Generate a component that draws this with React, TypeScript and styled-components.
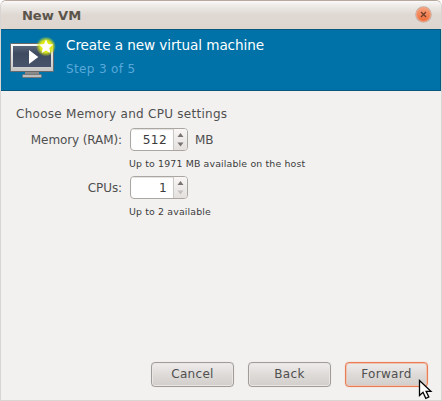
import React from "react";
import styled, { createGlobalStyle } from "styled-components";

const GlobalStyle = createGlobalStyle`
  * { box-sizing: border-box; }
  html, body { margin: 0; background: #fff; overflow: hidden; }
  body { font-family: "DejaVu Sans", sans-serif; color: #4f4f4f; }
`;

const Window = styled.main`
  position: relative;
  width: 442px;
  height: 401px;
  display: flex;
  flex-direction: column;
  border: 1px solid #d8d5d3;
  border-top-color: #b8a99f;
  border-radius: 6px 6px 0 0;
  background: #f2f1f0;
  overflow: hidden;
  white-space: nowrap;
`;

const TitleBar = styled.header`
  height: 28px;
  flex: none;
  display: flex;
  align-items: flex-start;
  justify-content: space-between;
  padding: 0 9px 0 21px;
  background: linear-gradient(#fbfaf9 0, #efece9 4px, #dfd8d2 14px, #dfd6d0 100%);
`;

const WindowTitle = styled.h1`
  margin: 0;
  font-size: 13.1px;
  line-height: 29px;
  font-weight: bold;
  letter-spacing: -0.1px;
  color: #5b544b;
`;

const CloseButton = styled.button`
  width: 17px;
  height: 17px;
  margin-top: 5px;
  padding: 0;
  border: 0;
  background: none;
  svg { display: block; }
`;

const Banner = styled.section`
  height: 62px;
  flex: none;
  display: flex;
  gap: 10px;
  padding: 7px 0 0 7px;
  border: 1px solid #07577f;
  border-left: 0;
  background: #0072a8;
`;

const BannerText = styled.div`
  flex: 1;
`;

const Heading = styled.h2`
  margin: 0;
  font-size: 13.6px;
  line-height: 17px;
  font-weight: normal;
  letter-spacing: -0.1px;
  color: #fff;
`;

const Step = styled.div`
  margin-top: 7px;
  font-size: 12px;
  line-height: 17px;
  letter-spacing: 0.35px;
  color: #58a9da;
`;

const Content = styled.section`
  flex: 1;
  padding: 14px 15px 0;
  font-size: 12px;
`;

const Intro = styled.div`
  height: 23px;
  line-height: 18px;
  letter-spacing: 0.27px;
`;

const Field = styled.div`
  display: grid;
  grid-template-columns: 106px 58px auto;
  column-gap: 7px;
  align-items: center;
  height: 23px;
  padding-left: 1px;
`;

const Label = styled.label`
  padding-right: 1px;
  text-align: right;
  letter-spacing: -0.1px;
`;

const Hint = styled.div`
  height: 25px;
  padding: 5px 0 0 113px;
  font-size: 9.4px;
  line-height: 16px;
  letter-spacing: 0.15px;
  color: #3c3c3c;
`;

const SpinBox = styled.div`
  display: flex;
  width: 58px;
  height: 23px;
  border: 1px solid #aaa6a2;
  border-radius: 4px;
  background: #fff;
  overflow: hidden;
`;

const Value = styled.span`
  flex: 1;
  padding-right: 6px;
  font-size: 12.2px;
  line-height: 22px;
  letter-spacing: 0.35px;
  text-align: right;
  color: #3c3c3c;
  box-shadow: inset 0 1px 1px #e4e2e0;
`;

const Stepper = styled.span`
  width: 14px;
  border-left: 1px solid #cbc8c5;
  background: linear-gradient(#f8f7f6, #e3e0de);
  svg { display: block; }
`;

const Footer = styled.footer`
  display: flex;
  justify-content: flex-end;
  gap: 14px;
  padding: 0 13px 13px 0;
`;

const Action = styled.button<{ $primary?: boolean }>`
  width: 83px;
  height: 25px;
  padding: 0;
  border: 1px solid ${(p) => (p.$primary ? "#e87c55" : "#a09c99")};
  border-radius: 4px;
  background: linear-gradient(#efedec, #dfdcda 45%, #d2cecb);
  box-shadow: inset 0 0 0 1px ${(p) => (p.$primary ? "#efc3b2" : "#e9e6e4")}, 0 0 1px ${(p) => (p.$primary ? "#ee9d7f" : "#d2cfcd")};
  font: 12px/23px "DejaVu Sans", sans-serif;
  letter-spacing: 0.3px;
  color: #4f4f4f;
`;

const Pointer = styled.svg`
  position: absolute;
  left: 417px;
  top: 378px;
`;

function CloseIcon() {
  return (
    <svg width="17" height="17" viewBox="0 0 17 17">
      <defs>
        <linearGradient id="close" x1="0" y1="0" x2="0" y2="1">
          <stop offset="0" stopColor="#f8a07c" />
          <stop offset="1" stopColor="#ee6c36" />
        </linearGradient>
      </defs>
      <circle cx="8.500" cy="8.500" r="8.300" fill="#c2aea4" />
      <circle cx="8.500" cy="8.500" r="7" fill="url(#close)" stroke="#f5a481" />
      <path d="M6 6L11 11M11 6L6 11" stroke="#6b3b28" strokeWidth="1.200" />
    </svg>
  );
}

function MonitorIcon() {
  return (
    <svg width="48" height="48" viewBox="8 37 48 48">
      <defs>
        <linearGradient id="frame" x1="0" y1="0" x2="0" y2="1">
          <stop offset="0" stopColor="#fafafa" />
          <stop offset="1" stopColor="#c4c4c4" />
        </linearGradient>
        <linearGradient id="screen" x1="0" y1="0" x2="0" y2="1">
          <stop offset="0" stopColor="#59667a" />
          <stop offset=".35" stopColor="#3e4b60" />
          <stop offset="1" stopColor="#47536a" />
        </linearGradient>
        <radialGradient id="glow">
          <stop offset="0" stopColor="#f5f900" />
          <stop offset=".6" stopColor="#d8e51a" />
          <stop offset="1" stopColor="#c5df22" stopOpacity="0" />
        </radialGradient>
      </defs>
      <path d="M25 71h14v4H25z" fill="#8a8a8a" />
      <rect x="22.500" y="74.500" width="19" height="3" rx="1" fill="#bdbdbd" stroke="#777" />
      <rect x="10.500" y="43.500" width="43" height="28" rx="1" fill="url(#frame)" stroke="#686868" />
      <rect x="13" y="46" width="38" height="21" fill="url(#screen)" />
      <path d="M29 50v14l9.300-7z" fill="#fff" />
      <circle cx="46" cy="46.500" r="10" fill="url(#glow)" />
      <path d="M46 39.500l2 4.500 5 .6-3.700 3.300 1 5-4.300-2.500-4.300 2.500 1-5-3.700-3.300 5-.6z" fill="#fff" />
    </svg>
  );
}

function Arrows({ canDecrease }: { canDecrease: boolean }) {
  return (
    <svg width="13" height="21" viewBox="0 0 13 21">
      <path d="M3.500 8l3-4 3 4z" fill="#777370" />
      <path d="M3.500 13.500l3 4 3-4z" fill={canDecrease ? "#777370" : "#c3c0bd"} />
    </svg>
  );
}

function Spinner({ value, canDecrease = true }: { value: number; canDecrease?: boolean }) {
  return (
    <SpinBox>
      <Value>{value}</Value>
      <Stepper><Arrows canDecrease={canDecrease} /></Stepper>
    </SpinBox>
  );
}

export default function App() {
  return (
    <>
      <GlobalStyle />
      <Window>
        <TitleBar>
          <WindowTitle>New VM</WindowTitle>
          <CloseButton aria-label="Close"><CloseIcon /></CloseButton>
        </TitleBar>
        <Banner>
          <MonitorIcon />
          <BannerText>
            <Heading>Create a new virtual machine</Heading>
            <Step>Step 3 of 5</Step>
          </BannerText>
        </Banner>
        <Content>
          <Intro>Choose Memory and CPU settings</Intro>
          <Field>
            <Label>Memory (RAM):</Label>
            <Spinner value={512} />
            <span>MB</span>
          </Field>
          <Hint>Up to 1971 MB available on the host</Hint>
          <Field>
            <Label>CPUs:</Label>
            <Spinner value={1} canDecrease={false} />
          </Field>
          <Hint>Up to 2 available</Hint>
        </Content>
        <Footer>
          <Action>Cancel</Action>
          <Action>Back</Action>
          <Action $primary>Forward</Action>
        </Footer>
        <Pointer width="16" height="22" viewBox="0 0 16 22">
          <path d="M1.500 1.500v15l3.500-3.200 2.800 6 3-1.300-2.700-5.700h4.800z" fill="#fff" stroke="#000" strokeWidth="1.300" />
        </Pointer>
      </Window>
    </>
  );
}
